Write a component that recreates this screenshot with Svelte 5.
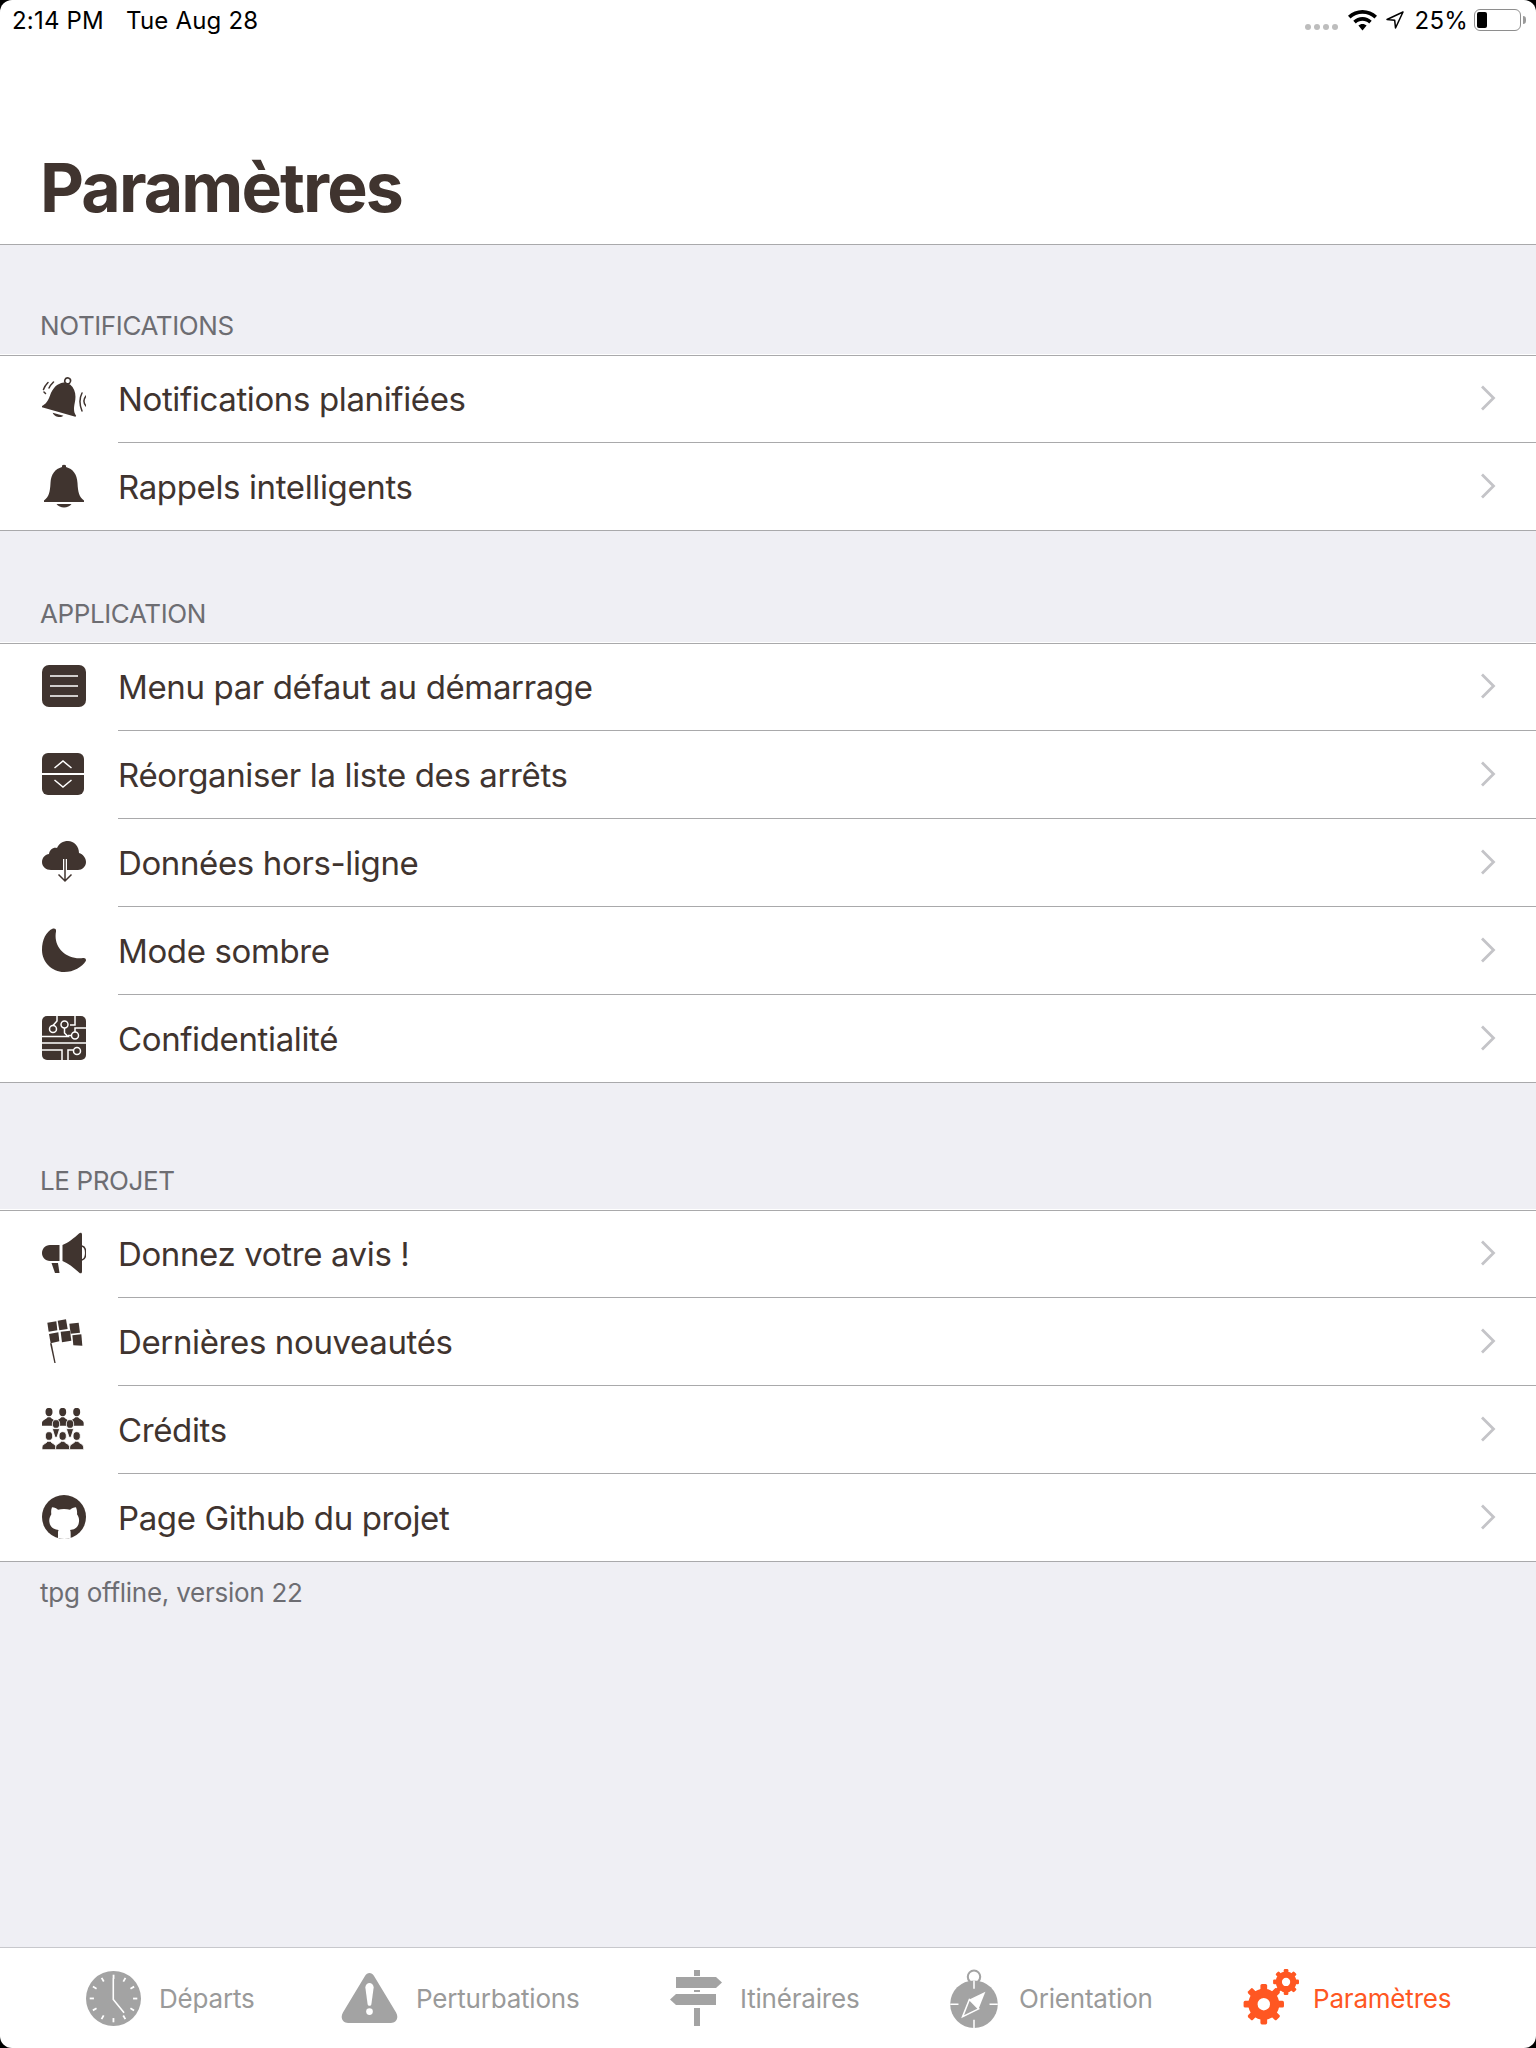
<script>
  const sections = [
    {
      title: 'Notifications',
      rows: [
        { icon: 'ring', label: 'Notifications planifiées' },
        { icon: 'bell', label: 'Rappels intelligents' }
      ]
    },
    {
      title: 'Application',
      rows: [
        { icon: 'menu', label: 'Menu par défaut au démarrage' },
        { icon: 'reorder', label: 'Réorganiser la liste des arrêts' },
        { icon: 'cloud', label: 'Données hors-ligne' },
        { icon: 'moon', label: 'Mode sombre' },
        { icon: 'chip', label: 'Confidentialité' }
      ]
    },
    {
      title: 'Le projet',
      rows: [
        { icon: 'horn', label: 'Donnez votre avis !' },
        { icon: 'flag', label: 'Dernières nouveautés' },
        { icon: 'people', label: 'Crédits' },
        { icon: 'github', label: 'Page Github du projet' }
      ]
    }
  ];

  const tabs = [
    { icon: 'clock', label: 'Départs' },
    { icon: 'warning', label: 'Perturbations' },
    { icon: 'sign', label: 'Itinéraires' },
    { icon: 'compass', label: 'Orientation' },
    { icon: 'gears', label: 'Paramètres', active: true }
  ];

  const peopleTop = [87, 128, 170];
  const peopleMid = [108, 150];
  const clockTicks = [30, 60, 90, 120, 150, 180, 210, 240, 270, 300, 330, 0];

  // teeth of the gear icons
  function gear(cx, cy, r, n, w, h) {
    let out = [];
    for (let i = 0; i < n; i++) {
      out.push({ x: cx - w / 2, y: cy - r - h, w, h: h + 4, rot: (360 / n) * i, cx, cy });
    }
    return out;
  }
  const gearBig = gear(22, 34, 15, 8, 6.5, 4.5);
  const gearSmall = gear(43.500, 12.500, 9.5, 8, 4.5, 3);

  function shoulders(x, y) {
    return `M${x - 21} ${y + 41}V${y + 33}C${x - 21} ${y + 25} ${x - 9} ${y + 23} ${x - 4} ${y + 16}H${x + 4}C${x + 9} ${y + 23} ${x + 21} ${y + 25} ${x + 21} ${y + 33}V${y + 41}Z`;
  }
</script>

<div class="page">
  <div class="status">
    <div class="status-left"><span>2:14 PM</span><span>Tue Aug 28</span></div>
    <div class="status-right">
      <div class="dots"><i></i><i></i><i></i><i></i></div>
      <svg class="wifi" viewBox="0 0 29 21" width="29" height="21">
        <path d="M14.5 0C9 0 4 2.100 0 5.700L2.500 8.500C5.700 5.500 9.900 3.700 14.500 3.700S23.300 5.500 26.500 8.500L29 5.700C25 2.100 20 0 14.500 0Z" fill="#000"/>
        <path d="M14.500 7C11 7 7.800 8.400 5.300 10.700L7.800 13.400C9.600 11.700 11.900 10.700 14.500 10.700S19.400 11.700 21.200 13.400L23.700 10.700C21.200 8.400 18 7 14.500 7Z" fill="#000"/>
        <path d="M14.500 14C12.900 14 11.500 14.600 10.400 15.600L14.500 20.500L18.600 15.600C17.500 14.600 16.100 14 14.500 14Z" fill="#000"/>
      </svg>
      <svg class="loc" viewBox="0 0 18 18" width="18" height="18">
        <path d="M17 1L1 8.500L8.700 9.300L9.500 17Z" fill="none" stroke="#000" stroke-width="1.500" stroke-linejoin="round"/>
      </svg>
      <span class="pct">25%</span>
      <div class="battery"><div class="level"></div></div>
      <div class="nub"></div>
    </div>
  </div>

  <header class="head"><h1>Paramètres</h1></header>

  <main class="content">
    {#each sections as section}
      <section class="group">
        <h2>{section.title}</h2>
        <ul>
          {#each section.rows as row}
            <li>
              <span class="icon">
                {#if row.icon === 'ring'}
                  <svg viewBox="0 0 44 44" width="44" height="44">
                    <g transform="translate(17 35) rotate(16) scale(1.120)" fill="#40342f">
                      <circle cx="0" cy="-28" r="2.600" fill="none" stroke="#40342f" stroke-width="1.400"/>
                      <path d="M-3 -25.500C-8.500 -23 -11 -18 -11.500 -11C-12 -5 -13 -2.500 -16 0L-15.500 1L15.500 1L16 0C13 -2.500 12 -5 11.500 -11C11 -18 8.500 -23 3 -25.500Z"/>
                      <path d="M-5 3H5C3 6 -3 6 -5 3Z"/>
                    </g>
                    <path d="M11.500 6C10 7.500 8 9.500 7 12M6 6.500C4 8.500 2.500 10.500 1.500 13.500M2 16L3.500 17.500M40 17C37.500 22 37.500 29 40 35M44 20C41.500 23 41.500 27 44 30" fill="none" stroke="#40342f" stroke-width="1.500" stroke-linecap="round"/>
                  </svg>
                {:else if row.icon === 'bell'}
                  <svg viewBox="0 0 44 44" width="44" height="44">
                    <path d="M20 3L20 1.500Q22 0 24 1.500L24 3C31 5 35 10 35.500 19C36 28 37 33 42 36.500L42 38L2 38L2 36.500C7 33 8 28 8.500 19C9 10 13 5 20 3Z" fill="#40342f"/>
                    <path d="M14.500 40H29.500C26.500 44.500 17.500 44.500 14.500 40Z" fill="#40342f"/>
                  </svg>
                {:else if row.icon === 'menu'}
                  <svg viewBox="0 0 44 44" width="44" height="44">
                    <rect x="0" y="1" width="44" height="42" rx="7" fill="#40342f"/>
                    <path d="M8 12H36M8 22H36M8 32H36" stroke="#fff" stroke-width="1.500"/>
                  </svg>
                {:else if row.icon === 'reorder'}
                  <svg viewBox="0 0 44 44" width="44" height="44">
                    <path d="M6 1H36A6 6 0 0 1 42 7V21H0V7A6 6 0 0 1 6 1Z" fill="#40342f"/>
                    <path d="M0 23H42V37A6 6 0 0 1 36 43H6A6 6 0 0 1 0 37Z" fill="#40342f"/>
                    <path d="M12.500 16L21 9L29.500 16M12.500 28L21 35L29.500 28" fill="none" stroke="#fff" stroke-width="1.500"/>
                  </svg>
                {:else if row.icon === 'cloud'}
                  <svg viewBox="0 0 44 44" width="44" height="44">
                    <path d="M9 30C4 30 0 26.500 0 22C0 17.500 3.500 14.500 7 14C7.500 10 11 7 15 8C17 3.500 21 1 26 1C32 1 37 6 37 13C41 14 44 18 44 22C44 26.500 40 30 36 30Z" fill="#40342f"/>
                    <path d="M23 19V32" stroke="#fff" stroke-width="4"/>
                    <path d="M23 19V41M16.500 34.500L23 41L29.500 34.500" fill="none" stroke="#40342f" stroke-width="1.500"/>
                  </svg>
                {:else if row.icon === 'moon'}
                  <svg viewBox="0 0 44 44" width="44" height="44">
                    <path d="M11 .6C4 3.500 0 12 0 22C0 34 10 44 22 44C32 44 40 39 43.800 33C44.500 31 43 29.500 41 30C24 32 11 19 14 3.500C14.500 1.200 13 0 11 .6Z" fill="#40342f"/>
                  </svg>
                {:else if row.icon === 'chip'}
                  <svg viewBox="0 0 44 44" width="44" height="44">
                    <rect width="44" height="44" rx="5" fill="#40342f"/>
                    <g fill="none" stroke="#fff" stroke-width="1.500">
                      <circle cx="11" cy="13" r="3.500"/>
                      <circle cx="22.500" cy="8.500" r="3.500"/>
                      <circle cx="33" cy="19.500" r="3.500"/>
                      <circle cx="35" cy="35" r="3.500"/>
                      <path d="M15 0V5L11 9.500M22.500 12V17L26 20.500H0M29.500 19.500H26M33 0V9L28 9M33 16V12H41L44 12M0 27H44M0 34H20V44M26 44V34H31.500"/>
                    </g>
                  </svg>
                {:else if row.icon === 'horn'}
                  <svg viewBox="0 0 44 44" width="44" height="44">
                    <path d="M17.500 14V30H8C3 30 0 26 0 22C0 18 3 14 8 14Z" fill="#40342f"/>
                    <path d="M9.500 32H16L17.500 42H13Z" fill="#40342f"/>
                    <path d="M20.500 14C26 12 32 7 37 2.500C38.500 1 40 1.500 40 3.500V40.500C40 42.500 38.500 43 37 41.500C32 37 26 32 20.500 30Z" fill="#40342f"/>
                    <path d="M40 15C45 16.500 45 27.500 40 29" fill="none" stroke="#40342f" stroke-width="1.600"/>
                  </svg>
                {:else if row.icon === 'flag'}
                  <svg viewBox="66 322 132 134" width="44" height="44.700">
                    <g fill="#40342f">
                      <path d="M82 333L109 329L112 356L86 360Z"/>
                      <path d="M113 327L138 323L143 352L118 356Z"/>
                      <path d="M148 336L176 333L180 363L152 366Z"/>
                      <path d="M87 367L115 362L118 389L92 395Z"/>
                      <path d="M122 360L150 357L154 387L126 392Z"/>
                      <path d="M157 371L184 368L187 402L160 401Z"/>
                      <path d="M90 395L95 395L107 454H103Z"/>
                    </g>
                  </svg>
                {:else if row.icon === 'people'}
                  <svg viewBox="66 24 126 126" width="42" height="42">
                    <g fill="#40342f">
                      {#each peopleTop as x}
                        <path d={shoulders(x, 36)}/>
                        <ellipse cx={x} cy="36" rx="10.500" ry="12.500"/>
                      {/each}
                      {#each peopleMid as x}
                        <path d="M{x - 11} 86H{x + 11}L{x + 3} 112H{x - 3}Z" stroke="#fff" stroke-width="2.500"/>
                        <ellipse cx={x} cy="72" rx="11" ry="13" stroke="#fff" stroke-width="2.500"/>
                      {/each}
                      {#each peopleTop as x}
                        <path d={shoulders(x, 108)} stroke="#fff" stroke-width="2.500"/>
                        <ellipse cx={x} cy="108" rx="11" ry="13" stroke="#fff" stroke-width="2.500"/>
                      {/each}
                    </g>
                  </svg>
                {:else if row.icon === 'github'}
                  <svg viewBox="66 282 132 132" width="44" height="44">
                    <circle cx="132" cy="348" r="66" fill="#40342f"/>
                    <path d="M96 319C104 320 110 322 114 326C125 323 139 323 150 326C155 322 161 320 168 319C171 327 172 334 171 340C176 347 178 354 177 362C175 381 162 386 150 387C152 390 152 394 152 398V411C139 415 126 415 114 411V398C114 393 114 390 116 387C104 386 90 380 88 362C87 354 90 346 94 340C93 333 93 326 96 319Z" fill="#fff"/>
                  </svg>
                {/if}
              </span>
              <span class="label">{row.label}</span>
              <svg class="chev" viewBox="0 0 16 26" width="16" height="26">
                <path d="M2 1.500L13.500 13L2 24.500" fill="none" stroke="#c4c4c8" stroke-width="2.800"/>
              </svg>
            </li>
          {/each}
        </ul>
      </section>
    {/each}
    <p class="foot">tpg offline, version 22</p>
  </main>

  <nav class="tabbar">
    {#each tabs as tab}
      <div class="tab" class:active={tab.active}>
        {#if tab.icon === 'clock'}
          <svg viewBox="0 0 52 52" width="55" height="55">
            <circle cx="26" cy="26" r="26" fill="#a3a3a3"/>
            {#each clockTicks as a}
              <rect x="25.200" y="3.500" width="1.700" height="4" fill="#fff" transform="rotate({a} 26 26)"/>
            {/each}
            <path d="M25.800 7V27L36 39.500" fill="none" stroke="#fff" stroke-width="1.500"/>
          </svg>
        {:else if tab.icon === 'warning'}
          <svg viewBox="0 0 54 48" width="57" height="50">
            <path d="M22.500 3C25 -1 29 -1 31.500 3L52.500 38C55.500 43 52.500 48 47.500 48H6.500C1.500 48 -1.500 43 1.500 38Z" fill="#a3a3a3"/>
            <path d="M23 14C23 8 31 8 31 14L28.800 30C28.500 32 25.500 32 25.200 30Z" fill="#fff"/>
            <circle cx="27" cy="37" r="3.200" fill="#fff"/>
          </svg>
        {:else if tab.icon === 'sign'}
          <svg viewBox="0 0 52 56" width="52" height="56">
            <path d="M24 0H30V6H24ZM24 20H30V22H24ZM24 38H30V56H24Z" fill="#a3a3a3"/>
            <path d="M6 7H46L52 12.500L46 18H6Z" fill="#a3a3a3"/>
            <path d="M6 24H46V35H6L0 29.500Z" fill="#a3a3a3"/>
          </svg>
        {:else if tab.icon === 'compass'}
          <svg viewBox="0 0 46 57" width="48" height="59">
            <circle cx="23" cy="7.500" r="6" fill="none" stroke="#a3a3a3" stroke-width="2"/>
            <path d="M21 12H25V15H21Z" fill="#a3a3a3"/>
            <circle cx="23" cy="34" r="23" fill="#a3a3a3"/>
            <path d="M23 11V19M23 49V57M0 34H8M38 34H46" stroke="#fff" stroke-width="1.500"/>
            <path d="M34 22L27.500 38.500L18.500 29.500Z" fill="#fff"/>
            <path d="M12 46L18.500 29.500L27.500 38.500Z" fill="none" stroke="#fff" stroke-width="1.500"/>
          </svg>
        {:else if tab.icon === 'gears'}
          <svg viewBox="0 0 56 56" width="58" height="58">
            <g fill="#ff5722">
              {#each gearBig as t}
                <rect x={t.x} y={t.y} width={t.w} height={t.h} rx="1.500" transform="rotate({t.rot} {t.cx} {t.cy})"/>
              {/each}
              {#each gearSmall as t}
                <rect x={t.x} y={t.y} width={t.w} height={t.h} rx="1.200" transform="rotate({t.rot} {t.cx} {t.cy})"/>
              {/each}
            </g>
            <circle cx="22" cy="34" r="10.500" fill="none" stroke="#ff5722" stroke-width="9"/>
            <circle cx="43.500" cy="12.500" r="7" fill="none" stroke="#ff5722" stroke-width="6"/>
          </svg>
        {/if}
        <span>{tab.label}</span>
      </div>
    {/each}
  </nav>

  <div class="corners"></div>
</div>

<style>
  :global(body) {
    margin: 0;
    background: #fff;
  }

  .page {
    position: relative;
    width: 1536px;
    height: 2048px;
    overflow: hidden;
    display: flex;
    flex-direction: column;
    background: #efeff4;
    font-family: Inter, "Liberation Sans", sans-serif;
    color: #40342f;
  }

  .corners {
    position: absolute;
    inset: 0;
    border-radius: 12px;
    box-shadow: 0 0 0 20px #000;
    pointer-events: none;
  }

  .status {
    height: 40px;
    display: flex;
    justify-content: space-between;
    align-items: center;
    background: #fff;
    color: #000;
    font-size: 24px;
    letter-spacing: 0.200px;
    padding: 0 10px 0 12px;
  }

  .status-left {
    display: flex;
    gap: 22px;
  }

  .status-right {
    display: flex;
    align-items: center;
  }

  .dots {
    display: flex;
    gap: 3px;
    margin: 14px 10px 0 0;
  }

  .dots i {
    width: 6px;
    height: 6px;
    border-radius: 50%;
    background: #bdbdbd;
  }

  .loc {
    margin-left: 9px;
  }

  .pct {
    margin-left: 11px;
  }

  .battery {
    width: 47px;
    height: 22px;
    margin-left: 6px;
    box-sizing: border-box;
    border: 1.500px solid #8e8e8e;
    border-radius: 6px;
    padding: 2px;
  }

  .level {
    width: 10px;
    height: 100%;
    background: #000;
    border-radius: 2px;
  }

  .nub {
    width: 3px;
    height: 8px;
    margin-left: 2px;
    background: #9a9a9a;
    border-radius: 0 3px 3px 0;
  }

  .head {
    height: 205px;
    box-sizing: border-box;
    display: flex;
    align-items: flex-end;
    padding: 0 0 17px 40px;
    background: #fff;
    border-bottom: 1px solid #a9a9ab;
  }

  h1 {
    margin: 0;
    font-size: 68px;
    line-height: 80px;
    font-weight: 700;
    letter-spacing: -1.900px;
  }

  .content {
    flex: 1;
  }

  .group h2 {
    margin: 0;
    padding: 64px 0 9px 40px;
    font-size: 26px;
    line-height: 38px;
    font-weight: 400;
    letter-spacing: -0.400px;
    text-transform: uppercase;
    color: #6d6d72;
  }

  .group:nth-child(1) h2 {
    padding-top: 62px;
  }

  .group:nth-child(3) h2 {
    padding-top: 79px;
  }

  .group ul {
    margin: 0;
    padding: 0;
    list-style: none;
    background: #fff;
    border-bottom: 1px solid #a9a9ab;
  }

  .group li {
    position: relative;
    height: 88px;
    display: flex;
    align-items: center;
    padding: 0 40px 0 42px;
  }

  .group li::before {
    content: '';
    position: absolute;
    left: 118px;
    right: 0;
    top: 0;
    height: 1px;
    background: #a9a9ab;
  }

  .group li:first-child::before {
    left: 0;
    top: 1px;
  }

  .icon {
    width: 44px;
    height: 45px;
    margin-right: 32px;
    display: flex;
    align-items: center;
  }

  .label {
    flex: 1;
    padding-top: 2px;
    font-size: 33px;
    line-height: 40px;
    letter-spacing: -0.370px;
  }

  .foot {
    margin: 0;
    padding: 14px 0 0 40px;
    font-size: 26px;
    line-height: 34px;
    letter-spacing: -0.250px;
    color: #6d6d72;
  }

  .tabbar {
    height: 101px;
    box-sizing: border-box;
    display: grid;
    grid-template-columns: 255px 329px 280px 291px auto;
    align-items: center;
    padding-left: 86px;
    background: #fff;
    border-top: 1px solid #c8c8cc;
  }

  .tab {
    display: flex;
    align-items: center;
    gap: 18px;
    font-size: 26px;
    letter-spacing: -0.200px;
    color: #9a9a9a;
  }

  .tab:nth-child(4) {
    gap: 21px;
  }

  .tab:nth-child(5) {
    gap: 14px;
  }

  .tab.active {
    color: #ff5722;
  }
</style>
